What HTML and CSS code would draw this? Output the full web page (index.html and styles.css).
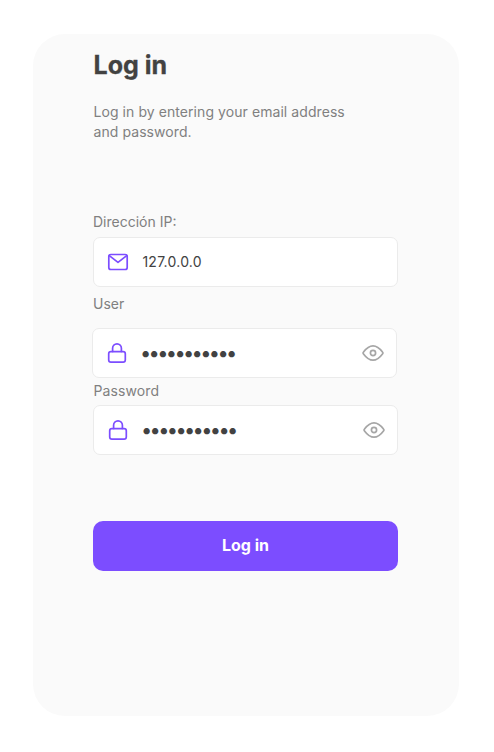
FILE: index.html
```html
<!DOCTYPE html>
<html lang="en">
<head>
<meta charset="utf-8">
<title>Log in</title>
<link rel="stylesheet" href="styles.css">
</head>
<body>
<svg width="0" height="0" class="symbols" aria-hidden="true">
  <symbol id="lock" viewBox="0 0 20 22"><rect x="1.7" y="9.6" width="16.6" height="10.6" rx="2.2"/><path d="M5.6 9.4V6.2a4.4 4.4 0 0 1 8.8 0v3.2"/></symbol>
  <symbol id="eye" viewBox="0 0 22 18"><path d="M1.500 9.900Q.700 9 1.500 8.100C4.200 4.500 7.400 1.900 11 1.900S17.800 4.500 20.500 8.100Q21.300 9 20.500 9.900C17.800 13.500 14.600 16.100 11 16.100S4.200 13.500 1.500 9.900Z"/><circle cx="11" cy="9" r="2.600"/></symbol>
</svg>
<main class="card">
  <h1 class="title">Log in</h1>
  <p class="intro">Log in by entering your email address<br>and password.</p>
  <form class="form">
    <span class="label label-ip">Dirección IP:</span>
    <div class="field">
      <svg class="icon mail" viewBox="0 0 22 18"><rect x="1.800" y="1.500" width="18.400" height="15" rx="2"/><path d="M2.300 2.600 11 9.400l8.700-6.800"/></svg>
      <span class="value">127.0.0.0</span>
    </div>
    <span class="label label-user">User</span>
    <div class="field field-user">
      <svg class="icon lock"><use href="#lock"/></svg>
      <span class="value dots">•••••••••••</span>
      <svg class="icon eye"><use href="#eye"/></svg>
    </div>
    <span class="label label-password">Password</span>
    <div class="field">
      <svg class="icon lock"><use href="#lock"/></svg>
      <span class="value dots">•••••••••••</span>
      <svg class="icon eye"><use href="#eye"/></svg>
    </div>
    <button class="submit" type="button">Log in</button>
  </form>
</main>
</body>
</html>
```
FILE: styles.css
```css
* { box-sizing: border-box; }
body { margin: 0; background: #fff; font-family: Inter, "Liberation Sans", sans-serif; }
.symbols { display: block; }
.card {
  width: 426px;
  height: 682px;
  margin: 34px 0 0 33px;
  padding: 15px 60px 0;
  background: #fafafa;
  border-radius: 32px;
}
.title { margin: 0; padding-left: 0.5px; font: 700 25px/32px Inter, sans-serif; color: #424242; -webkit-text-stroke: 0.3px #424242; }
.intro { margin: 21px 0 0; padding-left: 0.5px; font-size: 14px; line-height: 20px; letter-spacing: 0.07px; color: #808080; }
.form { display: flex; flex-direction: column; width: 305px; margin-top: 70px; }
.label { font-size: 14px; line-height: 20px; color: #808080; }
.label-ip { margin-bottom: 5px; }
.label-user { margin: 7px 0 14px; }
.label-password { margin: 3px 0 4px; padding-left: 0.5px; letter-spacing: 0.1px; }
.field {
  display: flex;
  align-items: center;
  height: 50px;
  padding: 0 12px 0 14px;
  background: #fff;
  border: 1px solid #ebebeb;
  border-radius: 7px;
}
.field-user { margin-left: -1px; margin-right: 1px; }
.icon { flex: none; fill: none; stroke: #7c4dff; stroke-width: 1.7; stroke-linecap: round; stroke-linejoin: round; }
.mail { width: 22px; height: 18px; margin-left: -0.6px; }
.lock { width: 20px; height: 22px; }
.eye { width: 22px; height: 18px; margin-left: auto; stroke: #a6a6a6; }
.value { margin-left: 13px; font-size: 14px; line-height: 20px; letter-spacing: 0.25px; color: #424242; }
.dots { margin-left: 13px; font-size: 20px; line-height: 18px; letter-spacing: -2.65px; }
.submit {
  height: 50px;
  margin-top: 66px;
  padding: 0 0 2px;
  border: 0;
  border-radius: 10px;
  background: #7c4dff;
  color: #fff;
  font: 700 16px/20px Inter, sans-serif;
}
```
